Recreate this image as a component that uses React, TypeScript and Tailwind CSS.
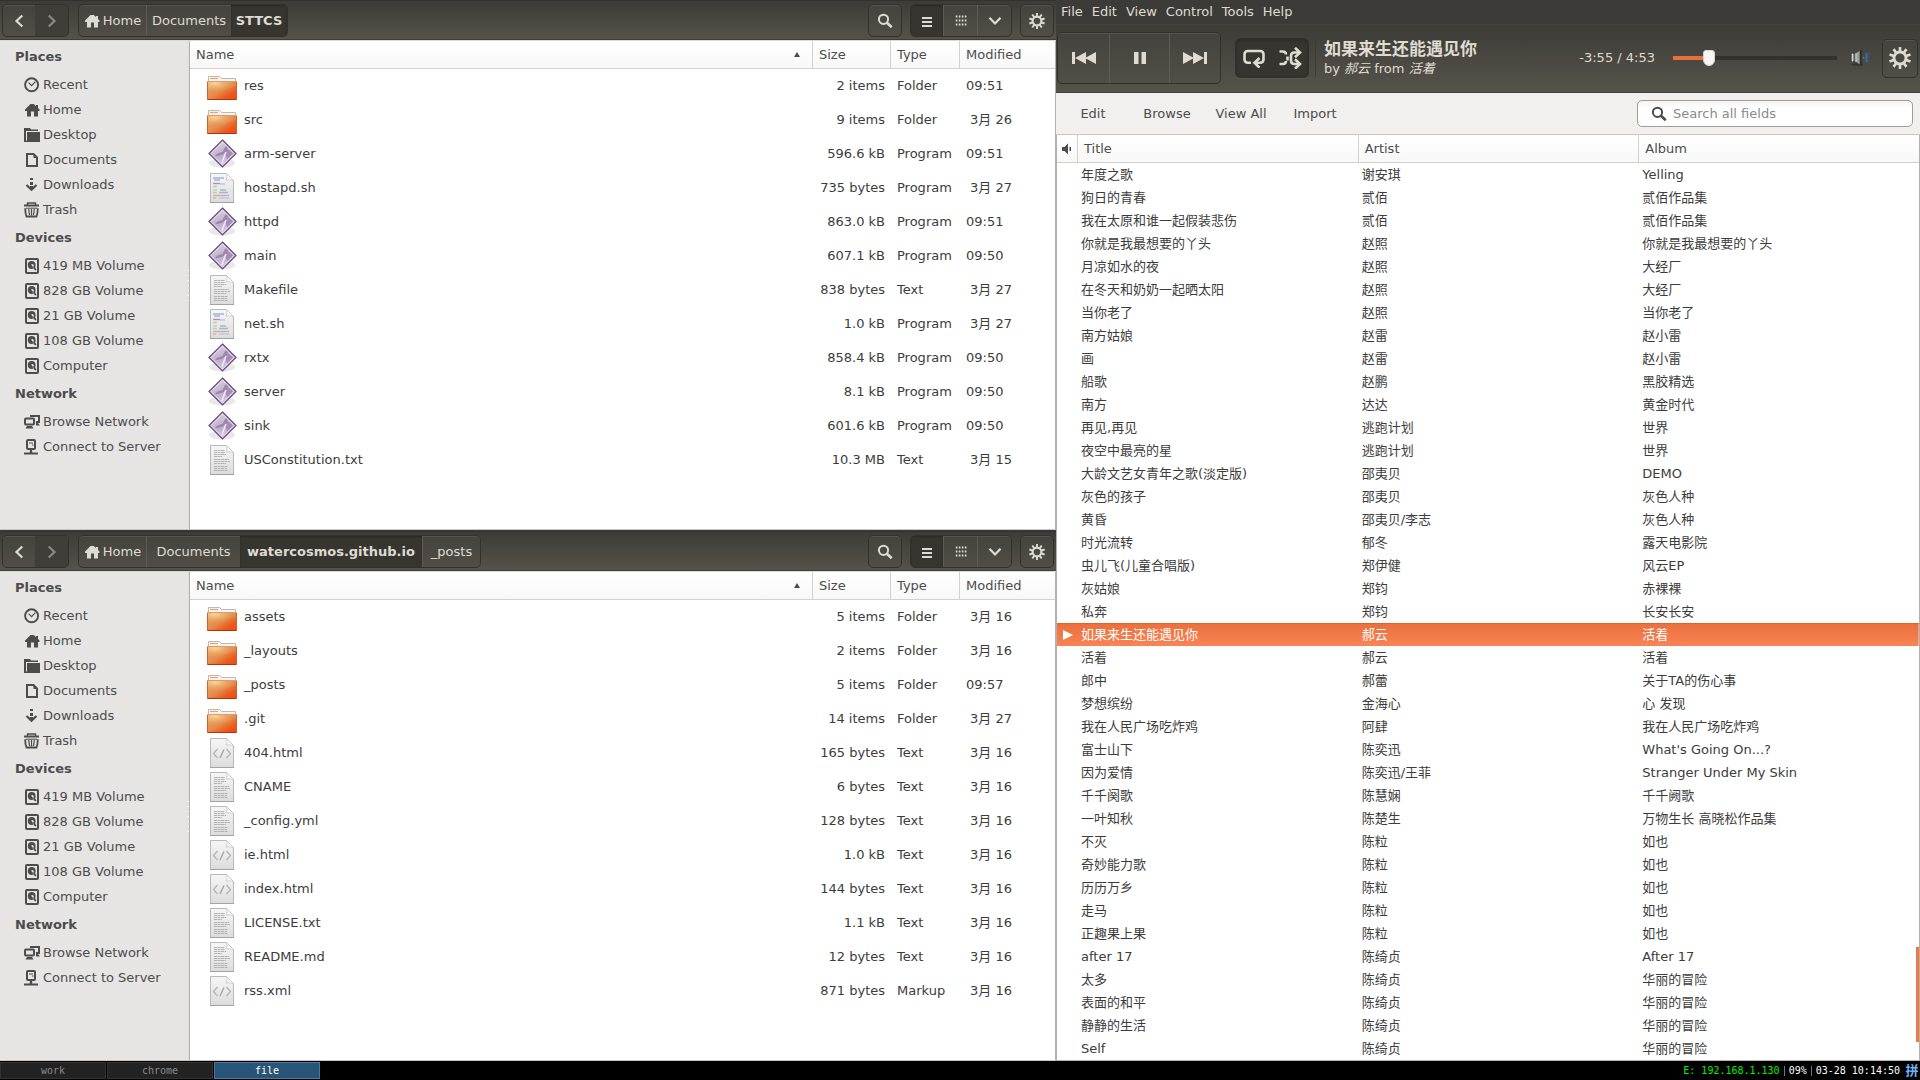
import React from "react";

type IconProps = { className?: string };

/* ---------- symbolic icons ---------- */

const HomeIcon = ({ className = "" }: IconProps) => (
  <svg viewBox="0 0 16 16" width="16" height="16" fill="currentColor" className={className}>
    <path d="M6.5 2h3.2L12 4V3h2v3l1.5 1.5V9H14v5.5h-4V9.5H7v5H3V9H1V7.5z" />
  </svg>
);

const RecentIcon = () => (
  <svg viewBox="0 0 16 16" width="16" height="16" fill="none" stroke="currentColor">
    <circle cx="7.6" cy="7.8" r="6.5" strokeWidth="1.9" />
    <path d="M4.6 5.6l3 3 3.8-4" strokeWidth="1.1" />
  </svg>
);

const DesktopIcon = () => (
  <svg viewBox="0 0 16 16" width="16" height="16" fill="currentColor">
    <path d="M0 1h6l1 1.5h7V4H2v11H0z" />
    <path d="M3 5h13v10H3z" />
    <path d="M0 13.5h4V15H0z" />
  </svg>
);

const DocumentIcon = () => (
  <svg viewBox="0 0 16 16" width="16" height="16" fill="none" stroke="currentColor" strokeWidth="2">
    <path d="M3 2h6.5L13 5.5V14H3z" />
    <path d="M9.5 1v5H14z" fill="currentColor" stroke="none" />
  </svg>
);

const DownloadIcon = () => (
  <svg viewBox="0 0 16 16" width="16" height="16" fill="none" stroke="currentColor">
    <path d="M7.5 1v2M7.5 5v8" strokeWidth="3" strokeDasharray="3 1" />
    <path d="M2.5 8l5 4.7 5-4.7" strokeWidth="2.2" />
  </svg>
);

const TrashIcon = () => (
  <svg viewBox="0 0 16 16" width="16" height="16" fill="none" stroke="currentColor">
    <path d="M0 3.5h15" strokeWidth="2" />
    <path d="M3.5 3V1h8v2" strokeWidth="1.4" />
    <path d="M1.2 6.2c0 3 .2 5.600 1.300 8.300h10c1.100-2.700 1.300-5.300 1.300-8.300" strokeWidth="1.8" />
    <path d="M2 6.200h11" strokeWidth="1" />
    <path d="M4.800 7c0 2.200.2 3.800.8 6M7.500 7v6.500M10.200 7c0 2.200-.2 3.800-.8 6" strokeWidth="1.200" />
  </svg>
);

const DriveIcon = () => (
  <svg viewBox="0 0 16 16" width="16" height="16">
    <rect x="2" y="1" width="12" height="14" rx="1" fill="none" stroke="currentColor" strokeWidth="2" />
    <circle cx="7.700" cy="7" r="3.900" fill="currentColor" />
    <path d="M7 6.500l2-.5 1 2-1.500.500z" fill="#e6e5e3" />
    <path d="M9.300 8.500l3 4-3-1.500z" fill="currentColor" stroke="#e6e5e3" strokeWidth=".5" />
    <path d="M10 9l1.800 3.200" stroke="currentColor" strokeWidth="1.600" />
  </svg>
);

const NetworkIcon = () => (
  <svg viewBox="0 0 16 16" width="16" height="16" fill="none" stroke="currentColor">
    <path d="M7 3V2h8v6h-3" strokeWidth="2" />
    <rect x="1" y="4.500" width="9" height="6" rx="1" strokeWidth="2" />
    <path d="M3 12h5l1.500 2.500h-8zM12 9h2l2 2.500h-4z" fill="currentColor" stroke="none" />
  </svg>
);

const ServerIcon = () => (
  <svg viewBox="0 0 16 16" width="16" height="16" fill="none" stroke="currentColor">
    <rect x="3" y="1" width="8" height="9" rx="1" strokeWidth="2" />
    <path d="M5 4h4M8 6h1.500" strokeWidth="1" />
    <path d="M7 10v4" strokeWidth="2.400" />
    <path d="M0 14.500h14" strokeWidth="2" />
  </svg>
);

const SearchIcon = () => (
  <svg viewBox="0 0 16 16" width="16" height="16" fill="none" stroke="currentColor" strokeWidth="2">
    <circle cx="6.500" cy="6.300" r="4.600" />
    <path d="M9.700 9.500l5 4.800" strokeWidth="2.600" />
  </svg>
);

const ChevronIcon = ({ className = "" }: IconProps) => (
  <svg viewBox="0 0 16 16" width="16" height="16" fill="none" stroke="currentColor" strokeWidth="2.200" className={className}>
    <path d="M11.300 2.500L5.500 8l5.800 5.500" />
  </svg>
);

const ListIcon = () => (
  <svg viewBox="0 0 16 16" width="16" height="16" fill="currentColor">
    <path d="M3 4h10v2H3zM3 8h10v2H3zM3 12h10v2H3z" />
  </svg>
);

const GridIcon = () => (
  <svg viewBox="0 0 16 16" width="16" height="16" fill="currentColor">
    {[3, 7, 11].map((y) =>
      [3, 6, 9, 12].map((x) => <rect key={x + "-" + y} x={x - 0.2} y={y - 0.5} width="1.600" height="2" />)
    )}
  </svg>
);

const GearIcon = ({ size = 16 }: { size?: number }) => (
  <svg viewBox="0 0 20 20" width={size} height={size} fill="none" stroke="currentColor">
    <circle cx="10" cy="10" r="5.500" strokeWidth="2.600" />
    {[0, 36, 72, 108, 144, 180, 216, 252, 288, 324].map((a) => (
      <path key={a} d="M10 0v4" strokeWidth="2.400" transform={`rotate(${a} 10 10)`} />
    ))}
  </svg>
);

/* ---------- file type icons ---------- */

const FolderGlyph = () => (
  <svg viewBox="0 0 32 34" width="32" height="34">
    <defs>
      <linearGradient id="folderBase" x1="0" y1="0" x2="1" y2="1">
        <stop offset="0" stopColor="#efb87a" />
        <stop offset=".5" stopColor="#e5894a" />
        <stop offset=".75" stopColor="#ec5a1e" />
        <stop offset="1" stopColor="#e84a12" />
      </linearGradient>
      <radialGradient id="folderShine" cx=".25" cy=".1" r=".8">
        <stop offset="0" stopColor="#f8d79c" />
        <stop offset="1" stopColor="#e08a43" stopOpacity=".3" />
      </radialGradient>
    </defs>
    <path d="M2.500 14V7.500h11l2 2h14V14z" fill="#f7f5f3" stroke="#bdbab6" />
    <path d="M4 9.500h8" stroke="#eda070" strokeWidth="1.200" />
    <rect x="1.500" y="12.500" width="29" height="18" rx=".5" fill="url(#folderBase)" stroke="#d0622f" />
    <path d="M2 13h28v4c-8 1-10 6-28 8z" fill="url(#folderShine)" />
    <path d="M2 12.500h28" stroke="#e29a6c" />
    <path d="M1.500 30.500h29" stroke="#b5330b" />
  </svg>
);

const ProgramGlyph = () => (
  <svg viewBox="0 0 32 34" width="32" height="34">
    <defs>
      <linearGradient id="gemFill" x1=".2" y1="0" x2=".6" y2="1">
        <stop offset="0" stopColor="#dcd6e2" />
        <stop offset=".55" stopColor="#bfb0cb" />
        <stop offset="1" stopColor="#d3c9ea" />
      </linearGradient>
    </defs>
    <ellipse cx="16" cy="26" rx="13" ry="4.500" fill="#000" opacity=".09" />
    <path d="M16.500 3L30 16.500 16.500 30 3 16.500z" fill="url(#gemFill)" stroke="#6a4877" strokeWidth="1.200" />
    <path d="M16.500 5L28 16.500 16.500 28 5 16.500z" fill="none" stroke="#efeaf3" strokeWidth=".8" />
    <path d="M20 9l2 2.500-1.500 3.500-5 3-7 1.500 3-3 5-1.500 2-4z" fill="#9c84ae" />
    <path d="M22 12l5 4.500-6 6-1-4-3 1 3-4z" fill="#a48db5" />
    <path d="M20 15l-2 5-2 6" fill="none" stroke="#f0eaf8" strokeWidth="1.500" />
  </svg>
);

const SheetBase = ({ children }: { children: React.ReactNode }) => (
  <svg viewBox="0 0 32 34" width="32" height="34">
    <defs>
      <linearGradient id="sheetFill" x1="0" y1="0" x2="0" y2="1">
        <stop offset="0" stopColor="#f6f6f6" />
        <stop offset="1" stopColor="#dcdcdc" />
      </linearGradient>
    </defs>
    <path d="M4.500 2.500h16l7 7v22h-23z" fill="url(#sheetFill)" stroke="#b9b9b9" />
    <path d="M20.500 2.500c1 2 .5 5-.5 6.500 3-.5 5 0 7.500.500z" fill="#fdfdfd" stroke="#c6c6c6" strokeWidth=".8" />
    <path d="M4 31.500h24" stroke="#a2a2a2" />
    {children}
  </svg>
);

const TextGlyph = () => (
  <SheetBase>
    <path
      d="M8 7.500h11M8 9.500h11M8 11.500h12M8 13.500h8M8 16.500h15M8 18.500h16M8 20.500h12M8 23.500h14M8 25.500h13M8 27.500h14"
      stroke="#b2b2b2"
      strokeDasharray="3 .5"
    />
  </SheetBase>
);

const ScriptGlyph = () => (
  <SheetBase>
    <path d="M7 7h11M8 9h6" stroke="#9dbccb" strokeWidth="1.400" />
    <path d="M7 12.500h7" stroke="#c77fc6" strokeWidth="1.400" />
    <path d="M14 13h5" stroke="#a9b5c0" />
    <path d="M7 15.500h4M7 19h4M7 21.500h4" stroke="#b4d8ae" strokeWidth="1.400" />
    <path d="M14 19h6M13 21.500h9" stroke="#98bcd0" strokeWidth="1.600" />
    <path d="M7 24.500h16" stroke="#dba0b8" strokeWidth="1.300" />
    <path d="M7 27h3" stroke="#e6a49c" strokeWidth="1.300" />
    <path d="M13 27h10" stroke="#b9cbd6" strokeWidth="1.300" />
  </SheetBase>
);

const MarkupGlyph = () => (
  <SheetBase>
    <path d="M11.500 13l-4 4.500 4 4.500M20.500 13l4 4.500-4 4.500" fill="none" stroke="#b4b4b4" strokeWidth="1.300" />
    <path d="M18 13.500l-4 8.500" stroke="#a0a0a0" strokeWidth="1.300" />
  </SheetBase>
);

const glyphs = {
  folder: FolderGlyph,
  program: ProgramGlyph,
  text: TextGlyph,
  script: ScriptGlyph,
  markup: MarkupGlyph,
};

/* ---------- data ---------- */

type FileRow = [keyof typeof glyphs, string, string, string, string];

const sttcsFiles: FileRow[] = [
  ["folder", "res", "2 items", "Folder", "09:51"],
  ["folder", "src", "9 items", "Folder", "3月 26"],
  ["program", "arm-server", "596.6 kB", "Program", "09:51"],
  ["script", "hostapd.sh", "735 bytes", "Program", "3月 27"],
  ["program", "httpd", "863.0 kB", "Program", "09:51"],
  ["program", "main", "607.1 kB", "Program", "09:50"],
  ["text", "Makefile", "838 bytes", "Text", "3月 27"],
  ["script", "net.sh", "1.0 kB", "Program", "3月 27"],
  ["program", "rxtx", "858.4 kB", "Program", "09:50"],
  ["program", "server", "8.1 kB", "Program", "09:50"],
  ["program", "sink", "601.6 kB", "Program", "09:50"],
  ["text", "USConstitution.txt", "10.3 MB", "Text", "3月 15"],
];

const siteFiles: FileRow[] = [
  ["folder", "assets", "5 items", "Folder", "3月 16"],
  ["folder", "_layouts", "2 items", "Folder", "3月 16"],
  ["folder", "_posts", "5 items", "Folder", "09:57"],
  ["folder", ".git", "14 items", "Folder", "3月 27"],
  ["markup", "404.html", "165 bytes", "Text", "3月 16"],
  ["text", "CNAME", "6 bytes", "Text", "3月 16"],
  ["text", "_config.yml", "128 bytes", "Text", "3月 16"],
  ["markup", "ie.html", "1.0 kB", "Text", "3月 16"],
  ["markup", "index.html", "144 bytes", "Text", "3月 16"],
  ["text", "LICENSE.txt", "1.1 kB", "Text", "3月 16"],
  ["text", "README.md", "12 bytes", "Text", "3月 16"],
  ["markup", "rss.xml", "871 bytes", "Markup", "3月 16"],
];

const sidebar: [string, [React.FC, string][]][] = [
  [
    "Places",
    [
      [RecentIcon, "Recent"],
      [HomeIcon, "Home"],
      [DesktopIcon, "Desktop"],
      [DocumentIcon, "Documents"],
      [DownloadIcon, "Downloads"],
      [TrashIcon, "Trash"],
    ],
  ],
  [
    "Devices",
    [
      [DriveIcon, "419 MB Volume"],
      [DriveIcon, "828 GB Volume"],
      [DriveIcon, "21 GB Volume"],
      [DriveIcon, "108 GB Volume"],
      [DriveIcon, "Computer"],
    ],
  ],
  [
    "Network",
    [
      [NetworkIcon, "Browse Network"],
      [ServerIcon, "Connect to Server"],
    ],
  ],
];

const songs: [string, string, string][] = [
  ["年度之歌", "谢安琪", "Yelling"],
  ["狗日的青春", "贰佰", "贰佰作品集"],
  ["我在太原和谁一起假装悲伤", "贰佰", "贰佰作品集"],
  ["你就是我最想要的丫头", "赵照", "你就是我最想要的丫头"],
  ["月凉如水的夜", "赵照", "大经厂"],
  ["在冬天和奶奶一起晒太阳", "赵照", "大经厂"],
  ["当你老了", "赵照", "当你老了"],
  ["南方姑娘", "赵雷", "赵小雷"],
  ["画", "赵雷", "赵小雷"],
  ["船歌", "赵鹏", "黑胶精选"],
  ["南方", "达达", "黄金时代"],
  ["再见,再见", "逃跑计划", "世界"],
  ["夜空中最亮的星", "逃跑计划", "世界"],
  ["大龄文艺女青年之歌(淡定版)", "邵夷贝", "DEMO"],
  ["灰色的孩子", "邵夷贝", "灰色人种"],
  ["黄昏", "邵夷贝/李志", "灰色人种"],
  ["时光流转", "郁冬", "露天电影院"],
  ["虫儿飞(儿童合唱版)", "郑伊健", "风云EP"],
  ["灰姑娘", "郑钧", "赤裸裸"],
  ["私奔", "郑钧", "长安长安"],
  ["如果来生还能遇见你", "郝云", "活着"],
  ["活着", "郝云", "活着"],
  ["郎中", "郝蕾", "关于TA的伤心事"],
  ["梦想缤纷", "金海心", "心 发现"],
  ["我在人民广场吃炸鸡", "阿肆", "我在人民广场吃炸鸡"],
  ["富士山下", "陈奕迅", "What's Going On...?"],
  ["因为爱情", "陈奕迅/王菲", "Stranger Under My Skin"],
  ["千千阕歌", "陈慧娴", "千千阙歌"],
  ["一叶知秋", "陈楚生", "万物生长 高晓松作品集"],
  ["不灭", "陈粒", "如也"],
  ["奇妙能力歌", "陈粒", "如也"],
  ["历历万乡", "陈粒", "如也"],
  ["走马", "陈粒", "如也"],
  ["正趣果上果", "陈粒", "如也"],
  ["after 17", "陈绮贞", "After 17"],
  ["太多", "陈绮贞", "华丽的冒险"],
  ["表面的和平", "陈绮贞", "华丽的冒险"],
  ["静静的生活", "陈绮贞", "华丽的冒险"],
  ["Self", "陈绮贞", "华丽的冒险"],
];
const playing = 20;

/* ---------- shared pieces ---------- */

const groupBox =
  "flex shrink-0 overflow-hidden rounded-[5px] border border-[#33312c] bg-gradient-to-b from-[#45433e] to-[#504e46] shadow-[inset_0_1px_0_#56544c]";
const cell = "flex items-center justify-center";
const pressed = "bg-[#373530] shadow-[inset_0_1px_2px_#2a2925]";
const divide = "border-l border-[#5f5c54]";
const th = "h-[28px] border-b border-[#d4d0cc] bg-gradient-to-b from-white to-[#f8f8f8] p-0 text-left font-normal";

type Crumb = { label: string; width: string; home?: boolean; current?: boolean };

function FilePane({ crumbs, files, name }: { crumbs: Crumb[]; files: FileRow[]; name: string }) {
  return (
    <section aria-label={name} className="flex flex-1 flex-col">
      <header className="flex h-[41px] shrink-0 items-start gap-2 border-b border-[#dcdad6] bg-gradient-to-b from-[#3c3b37] to-[#56534a] pr-0.5 pl-0.5 pt-1 text-[#dfdbd2] shadow-[inset_0_-1px_0_#3f3d37,inset_0_1px_0_#33322e]">
        <div className={groupBox}>
          <button aria-label="Back" className={`${cell} h-[31px] w-8`}>
            <ChevronIcon />
          </button>
          <button aria-label="Forward" className={`${cell} h-[31px] w-[33px] bg-[#403e39] text-[#8b8880]`}>
            <ChevronIcon className="rotate-180" />
          </button>
        </div>
        <nav aria-label="Path" className={`${groupBox} ml-px`}>
          {crumbs.map((c, i) => (
            <button
              key={c.label}
              className={`${cell} h-[31px] gap-[3px] ${c.width} ${
                c.current ? `${pressed} font-bold` : i > 0 ? divide : ""
              }`}
            >
              {c.home && <HomeIcon />}
              {c.label}
            </button>
          ))}
        </nav>
        <div className={`${groupBox} ml-auto`}>
          <button aria-label="Search" className={`${cell} h-[31px] w-8`}>
            <SearchIcon />
          </button>
        </div>
        <div className={groupBox}>
          <button aria-label="List view" className={`${cell} ${pressed} h-[31px] w-8`}>
            <ListIcon />
          </button>
          <button aria-label="Grid view" className={`${cell} ${divide} h-[31px] w-[34px]`}>
            <GridIcon />
          </button>
          <button aria-label="View options" className={`${cell} ${divide} h-[31px] w-[34px]`}>
            <ChevronIcon className="-rotate-90" />
          </button>
        </div>
        <div className={groupBox}>
          <button aria-label="Settings" className={`${cell} h-[31px] w-8`}>
            <GearIcon />
          </button>
        </div>
      </header>
      <div className="flex flex-1 border-b border-[#c9c6c1]">
        <nav aria-label={`${name} places`} className="w-[188px] shrink-0 bg-[#e6e5e3] text-[#4c4c4c]">
          {sidebar.map(([title, items]) => (
            <div key={title}>
              <h2 className="pl-[15px] text-[13px] leading-[31px] font-bold">{title}</h2>
              <ul>
                {items.map(([Icon, label]) => (
                  <li key={label}>
                    <a href="#" className="flex h-[25px] items-center gap-[3px] pl-6">
                      <Icon />
                      {label}
                    </a>
                  </li>
                ))}
              </ul>
            </div>
          ))}
        </nav>
        <div className="flex w-0.5 shrink-0 flex-col justify-center gap-1 border-r border-[#b5b0ab] bg-[#e0dfdc]">
          {[0, 1, 2, 3, 4, 5, 6].map((i) => (
            <i key={i} className="h-px w-px bg-white" />
          ))}
        </div>
        <div className="flex-1 border-r border-[#b5b0ab] bg-white">
          <table className="w-full table-fixed border-separate border-spacing-0">
            <thead className="text-[#4c4c4c]">
              <tr>
                <th className={th}>
                  <div className="flex items-center justify-between pr-3 pl-1.5">
                    Name
                    <svg viewBox="0 0 6 5" width="6" height="5" fill="#4c4c4c">
                      <path d="M3 0l3 5H0z" />
                    </svg>
                  </div>
                </th>
                <th className={`${th} w-[78px] border-l pl-1.5`}>Size</th>
                <th className={`${th} w-[69px] border-l pl-1.5`}>Type</th>
                <th className={`${th} w-24 border-l pl-1.5`}>Modified</th>
              </tr>
            </thead>
            <tbody className="text-[#3c3c3c]">
              {files.map(([kind, file, size, type, date]) => {
                const Glyph = glyphs[kind];
                return (
                  <tr key={file}>
                    <td className="h-[34px] p-0">
                      <div className="flex items-center gap-1.5 pl-4">
                        <Glyph />
                        {file}
                      </div>
                    </td>
                    <td className="p-0 pr-[5px] text-right">{size}</td>
                    <td className="p-0 pl-[7px]">{type}</td>
                    <td className={date.includes("月") ? "p-0 pl-[11px]" : "p-0 pl-[7px]"}>{date}</td>
                  </tr>
                );
              })}
            </tbody>
          </table>
        </div>
      </div>
    </section>
  );
}

function Player() {
  return (
    <section aria-label="Music player" className="flex flex-1 flex-col">
      <nav aria-label="Menu" className="flex h-6 items-start gap-px bg-[#3c3b37] px-px pt-1 text-[#dfdbd2]">
        {["File", "Edit", "View", "Control", "Tools", "Help"].map((m) => (
          <button key={m} className="px-1">
            {m}
          </button>
        ))}
      </nav>
      <div className="flex h-[69px] shrink-0 items-center border-t border-b border-t-[#45443f] border-b-[#45433c] bg-gradient-to-b from-[#3d3c37] to-[#56534a] pr-0.5 pb-px pl-px text-[#dfdbd2]">
        <div className={groupBox}>
          <button aria-label="Previous" className={`${cell} h-[50px] w-[51px]`}>
            <svg viewBox="0 0 24 12" width="24" height="12" fill="currentColor">
              <path d="M0 0h3v12H0zM14 0v12L3 6zM24 0v12L13 6z" />
            </svg>
          </button>
          <button aria-label="Pause" className={`${cell} ${divide} h-[50px] w-[60px]`}>
            <svg viewBox="0 0 12 12" width="12" height="12" fill="currentColor">
              <path d="M0 0h4.500v12H0zM7.500 0H12v12H7.500z" />
            </svg>
          </button>
          <button aria-label="Next" className={`${cell} ${divide} h-[50px] w-[51px]`}>
            <svg viewBox="0 0 24 12" width="24" height="12" fill="currentColor">
              <path d="M21 0h3v12h-3zM10 0v12l11-6zM0 0v12l11-6z" />
            </svg>
          </button>
        </div>
        <div className="ml-[14px] flex shrink-0 overflow-hidden rounded-[5px] border border-[#33312c] bg-[#373530] shadow-[0_1px_0_#5c594f,inset_0_1px_3px_#2a2925]">
          <button aria-label="Repeat" aria-pressed="true" className={`${cell} h-[38px] w-9`}>
            <svg viewBox="0 0 24 20" width="24" height="20" fill="none" stroke="currentColor" strokeWidth="2.600">
              <path d="M9 14.800H6c-2.500 0-3.500-1.200-3.500-3.500V6.500C2.500 4 3.500 3 6 3h12c2.500 0 3.500 1 3.500 3.500v4.800c0 2.300-1 3.500-3.500 3.500h-4" />
              <path d="M17.500 10l-5 4.800 5 4.800" />
            </svg>
          </button>
          <button aria-label="Shuffle" aria-pressed="true" className={`${cell} h-[38px] w-9`}>
            <svg viewBox="0 0 24 22" width="24" height="22" fill="none" stroke="currentColor" strokeWidth="2.600">
              <path d="M1.500 4.500h3c2.500 0 3.500 1 3.500 3M1.500 17h3.500c2 0 3-1 3-3M21 5.500h-4.500c-2.500 0-3.500 1.200-3.500 3.500M9.500 9.500v4M13 8v5.500c0 2.500 1 3.500 3.500 3.500H21" />
              <path d="M17 .8l5 4.700-5 4.700M17 12.300l5 4.700-5 4.700" />
            </svg>
          </button>
        </div>
        <div className="ml-[6px] h-[38px] border-l border-[#3d3b36]" />
        <div className="ml-2 flex flex-col">
          <h1 className="text-[17px] leading-[22px] font-bold">如果来生还能遇见你</h1>
          <p className="leading-[18px]">
            by <em>郝云</em> from <em>活着</em>
          </p>
        </div>
        <output className="ml-auto">-3:55 / 4:53</output>
        <input
          type="range"
          aria-label="Playback position"
          min={0}
          max={293}
          defaultValue={58}
          className="ml-[18px] h-4 w-[164px] appearance-none bg-transparent [&::-webkit-slider-runnable-track]:h-1 [&::-webkit-slider-runnable-track]:bg-[linear-gradient(90deg,#e9703d_22%,#34322e_22%)] [&::-webkit-slider-thumb]:-mt-1.5 [&::-webkit-slider-thumb]:h-4 [&::-webkit-slider-thumb]:w-3 [&::-webkit-slider-thumb]:appearance-none [&::-webkit-slider-thumb]:rounded-t-[3px] [&::-webkit-slider-thumb]:rounded-b-[6px] [&::-webkit-slider-thumb]:border [&::-webkit-slider-thumb]:border-[#d8d4ce] [&::-webkit-slider-thumb]:bg-[#f6f5f3]"
        />
        <button aria-label="Volume" className="ml-[13px]">
          <svg viewBox="0 0 20 20" width="20" height="20">
            <ellipse cx="7" cy="16.500" rx="6" ry="1.500" fill="#000" opacity=".25" />
            <path d="M1 5.500h4v8H1z" fill="#8d8d8a" stroke="#2c2b28" strokeWidth=".6" />
            <path d="M5 5.500L10 2v15l-5-3.500z" fill="#9d9d9a" stroke="#2c2b28" strokeWidth=".6" />
            <path d="M2.500 5.500v8M6 5v9" stroke="#d6d6d3" />
            <path d="M11 2v15.500" stroke="#1f1e1c" />
            <path d="M13.500 8.500v2.500" stroke="#2e6fa8" strokeWidth="2" />
            <path d="M16.500 5v9" stroke="#2e6fa8" strokeWidth="2" />
            <path d="M19 2.500v14" stroke="#4a5258" strokeWidth="1" />
          </svg>
        </button>
        <div className={`${groupBox} ml-3`}>
          <button aria-label="Preferences" className={`${cell} h-[37px] w-[34px]`}>
            <GearIcon size={22} />
          </button>
        </div>
      </div>
      <div className="flex h-[42px] shrink-0 items-center border-b border-[#cbc6c0] bg-[#f1f0ee] pr-[7px] text-[#4c4c4c]">
        {["Edit", "Browse", "View All", "Import"].map((b) => (
          <button key={b} className="w-[74px]">
            {b}
          </button>
        ))}
        <label className="ml-auto flex h-[27px] w-[276px] items-center gap-1.5 rounded-[5px] border border-[#a09d98] bg-gradient-to-b from-[#f4f4f4] to-white to-30% pl-[13px]">
          <SearchIcon />
          <input
            type="search"
            aria-label="Search all fields"
            placeholder="Search all fields"
            className="min-w-0 flex-1 bg-transparent outline-none placeholder:text-[#8a8a8a]"
          />
        </label>
      </div>
      <div className="relative flex-1 border-x border-b border-[#b5b0ab] bg-white">
        <table className="w-full table-fixed border-separate border-spacing-0">
          <thead className="text-[#4c4c4c]">
            <tr>
              <th className={`${th} w-5`}>
                <svg aria-label="Playing" viewBox="0 0 10 12" width="10" height="12" fill="#4c4c4c" className="mx-auto">
                  <path d="M0 4h2.500L6 .5v11L2.500 8H0zM7.500 4h1.500v4H7.500z" />
                </svg>
              </th>
              <th className={`${th} border-l pl-1.5`}>Title</th>
              <th className={`${th} border-l pl-1.5`}>Artist</th>
              <th className={`${th} border-l pl-1.5`}>Album</th>
            </tr>
          </thead>
          <tbody className="text-[#3c3c3c]">
            {songs.map(([title, artist, album], i) => (
              <tr
                key={title}
                className={
                  i === playing
                    ? "bg-gradient-to-b from-[#ea6f3c] to-[#f98455] text-white shadow-[inset_0_1px_0_#dc6433]"
                    : ""
                }
              >
                <td className="h-[23px] p-0">
                  {i === playing && (
                    <svg aria-label="Now playing" viewBox="0 0 10 10" width="10" height="10" fill="white" className="ml-1.5">
                      <path d="M0 0l10 5-10 5z" />
                    </svg>
                  )}
                </td>
                <td className="p-0 pl-1">{title}</td>
                <td className="p-0 pl-1">{artist}</td>
                <td className="p-0 pl-1">{album}</td>
              </tr>
            ))}
          </tbody>
        </table>
        <div className="absolute right-0 bottom-[18px] h-[95px] w-[3px] bg-[#f07746]" />
      </div>
    </section>
  );
}

function TaskBar() {
  return (
    <footer className="flex h-[19px] shrink-0 items-center gap-px bg-black font-['DejaVu_Sans_Mono','Noto_Sans_CJK_SC',monospace] text-[10px] leading-none text-[#8a8a8a]">
      {["work", "chrome", "file"].map((t) => (
        <button
          key={t}
          className={
            t === "file"
              ? "h-[17px] w-[106px] border border-[#4c7899] bg-[#285577] text-white"
              : "h-[17px] w-[106px] border border-[#333333] bg-[#222222]"
          }
        >
          {t}
        </button>
      ))}
      <div className="ml-auto flex items-center text-white">
        <span className="pr-1 text-[#00f000]">E: 192.168.1.130</span>
        <span className="border-l border-[#777777] px-1">09%</span>
        <span className="border-l border-[#777777] px-1">03-28 10:14:50</span>
        <span className="w-4 pb-0.5 text-center font-['Noto_Sans_CJK_SC',sans-serif] text-[13px] font-bold text-[#6fb4f5]">拼</span>
      </div>
    </footer>
  );
}

export default function App() {
  return (
    <div className="flex min-h-screen flex-col bg-black font-['DejaVu_Sans','Noto_Sans_CJK_SC',sans-serif] text-[13px] leading-4">
      <main className="flex flex-1">
        <div className="flex w-[55%] flex-col gap-px bg-[#3c3b37]">
          <FilePane
            name="STTCS"
            files={sttcsFiles}
            crumbs={[
              { label: "Home", width: "w-[67px]", home: true },
              { label: "Documents", width: "w-[85px]" },
              { label: "STTCS", width: "w-[56px]", current: true },
            ]}
          />
          <FilePane
            name="watercosmos.github.io"
            files={siteFiles}
            crumbs={[
              { label: "Home", width: "w-[67px]", home: true },
              { label: "Documents", width: "w-[94px]" },
              { label: "watercosmos.github.io", width: "w-[182px]", current: true },
              { label: "_posts", width: "w-[58px]" },
            ]}
          />
        </div>
        <Player />
      </main>
      <TaskBar />
    </div>
  );
}
